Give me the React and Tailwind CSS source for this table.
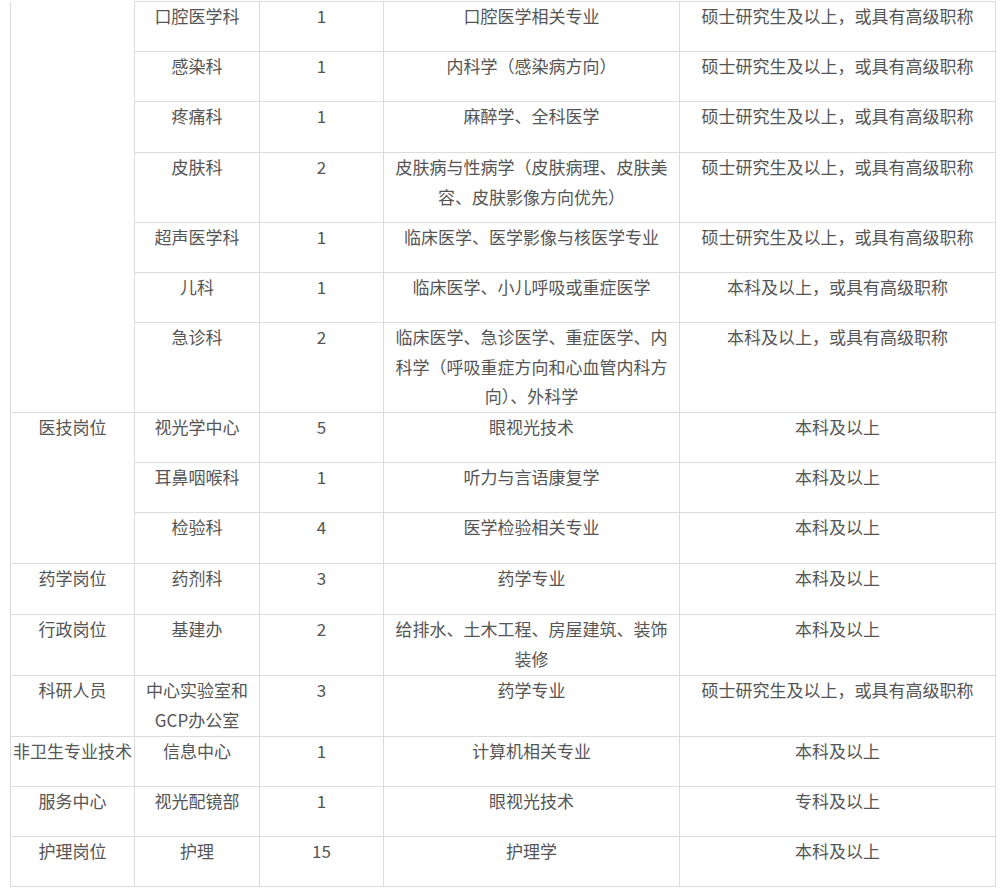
const rows = [
  { h: 'h-[50px]', dept: '口腔医学科', n: '1', major: '口腔医学相关专业', edu: '硕士研究生及以上，或具有高级职称' },
  { h: 'h-[50px]', dept: '感染科', n: '1', major: '内科学（感染病方向）', edu: '硕士研究生及以上，或具有高级职称' },
  { h: 'h-[51px]', dept: '疼痛科', n: '1', major: '麻醉学、全科医学', edu: '硕士研究生及以上，或具有高级职称' },
  { h: 'h-[70px]', dept: '皮肤科', n: '2', major: '皮肤病与性病学（皮肤病理、皮肤美容、皮肤影像方向优先）', edu: '硕士研究生及以上，或具有高级职称' },
  { h: 'h-[50px]', dept: '超声医学科', n: '1', major: '临床医学、医学影像与核医学专业', edu: '硕士研究生及以上，或具有高级职称' },
  { h: 'h-[50px]', dept: '儿科', n: '1', major: '临床医学、小儿呼吸或重症医学', edu: '本科及以上，或具有高级职称' },
  { h: 'h-[90px]', dept: '急诊科', n: '2', major: '临床医学、急诊医学、重症医学、内科学（呼吸重症方向和心血管内科方向）、外科学', edu: '本科及以上，或具有高级职称' },
  { h: 'h-[50px]', group: '医技岗位', span: 3, dept: '视光学中心', n: '5', major: '眼视光技术', edu: '本科及以上' },
  { h: 'h-[50px]', dept: '耳鼻咽喉科', n: '1', major: '听力与言语康复学', edu: '本科及以上' },
  { h: 'h-[51px]', dept: '检验科', n: '4', major: '医学检验相关专业', edu: '本科及以上' },
  { h: 'h-[51px]', group: '药学岗位', span: 1, dept: '药剂科', n: '3', major: '药学专业', edu: '本科及以上' },
  { h: 'h-[61px]', group: '行政岗位', span: 1, dept: '基建办', n: '2', major: '给排水、土木工程、房屋建筑、装饰装修', edu: '本科及以上' },
  { h: 'h-[61px]', group: '科研人员', span: 1, dept: '中心实验室和GCP办公室', n: '3', major: '药学专业', edu: '硕士研究生及以上，或具有高级职称' },
  { h: 'h-[50px]', group: '非卫生专业技术', span: 1, dept: '信息中心', n: '1', major: '计算机相关专业', edu: '本科及以上' },
  { h: 'h-[50px]', group: '服务中心', span: 1, dept: '视光配镜部', n: '1', major: '眼视光技术', edu: '专科及以上' },
  { h: 'h-[50px]', group: '护理岗位', span: 1, dept: '护理', n: '15', major: '护理学', edu: '本科及以上' },
];

const cell = 'border border-[#dcdcdc] align-top text-center px-[10px] p-0';

export default function App() {
  return (
    <div className="bg-white min-h-[890px] pt-px pl-[10px] pr-[5px]">
      <table
        className="table-fixed border-collapse w-[985px] text-[17px] leading-[29.6px] text-[#555]"
        style={{ fontFamily: '"Noto Sans CJK SC", "Noto Sans", sans-serif' }}
      >
        <colgroup>
          <col className="w-[124px]" />
          <col className="w-[125px]" />
          <col className="w-[124px]" />
          <col className="w-[296px]" />
          <col className="w-[316px]" />
        </colgroup>
        <tbody>
          {rows.map((r, i) => (
            <tr key={i} className={r.h}>
              {i === 0 && (
                <td rowSpan={7} className="border-x border-b border-[#dcdcdc]" />
              )}
              {r.group && (
                <td rowSpan={r.span} className="border border-[#dcdcdc] align-top text-center p-0 whitespace-nowrap">
                  <div className="-mt-px">{r.group}</div>
                </td>
              )}
              <td className={cell}><div className="-mt-px">{r.dept}</div></td>
              <td className={cell}><div className="-mt-px">{r.n}</div></td>
              <td className={cell}><div className="-mt-px">{r.major}</div></td>
              <td className={cell}><div className="-mt-px">{r.edu}</div></td>
            </tr>
          ))}
        </tbody>
      </table>
    </div>
  );
}
